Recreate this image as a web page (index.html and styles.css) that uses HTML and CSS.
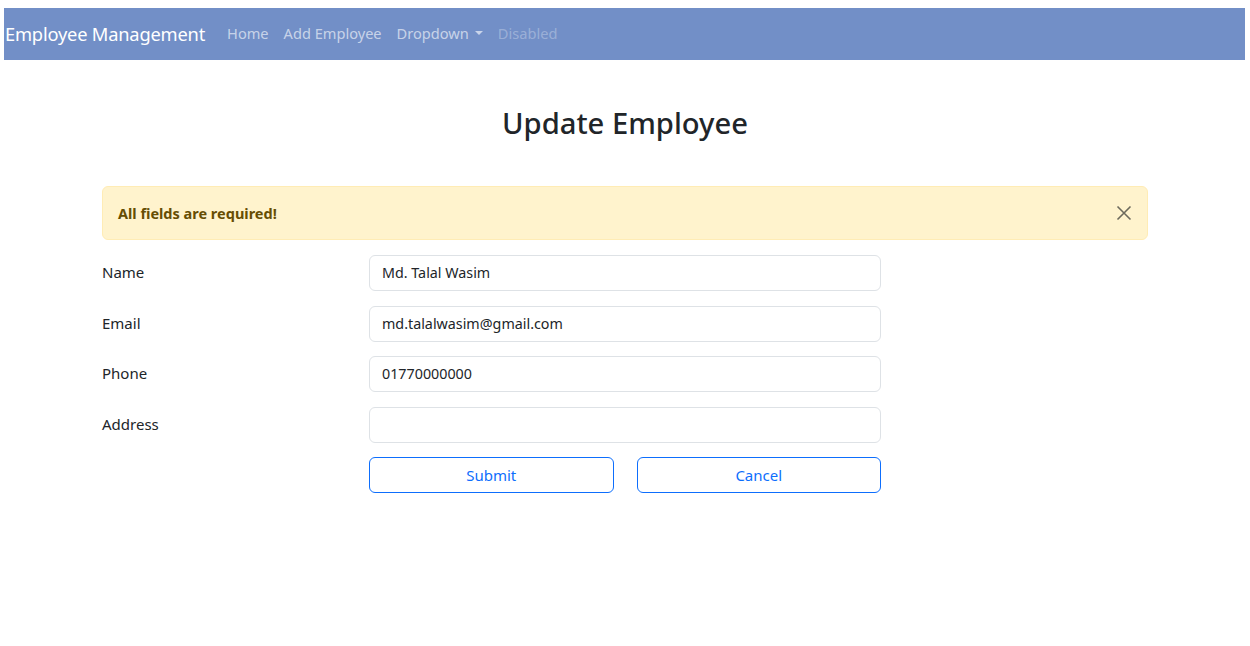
FILE: index.html
```html
<!DOCTYPE html>
<html>
<head>
<meta charset="utf-8">
<link rel="stylesheet" href="styles.css">
</head>
<body>
<nav class="navbar">
  <span class="brand">Employee Management</span>
  <ul class="nav">
    <li class="nav-link">Home</li>
    <li class="nav-link">Add Employee</li>
    <li class="nav-link">Dropdown <span class="caret"></span></li>
    <li class="nav-link disabled">Disabled</li>
  </ul>
</nav>
<main class="container">
  <h1 class="title">Update Employee</h1>
  <div class="alert">
    <strong>All fields are required!</strong>
    <button class="close" aria-label="Close">
      <svg width="16" height="16" viewBox="0 0 16 16"><path d="M1.5 1.5 L14.5 14.5 M14.5 1.5 L1.5 14.5" stroke="currentColor" stroke-width="1.6" fill="none"/></svg>
    </button>
  </div>
  <form class="form">
    <label class="label">Name</label>
    <input class="input" type="text" value="Md. Talal Wasim">
    <label class="label">Email</label>
    <input class="input" type="text" value="md.talalwasim@gmail.com">
    <label class="label">Phone</label>
    <input class="input" type="text" value="01770000000">
    <label class="label">Address</label>
    <input class="input" type="text" value="">
    <div class="buttons">
      <button type="button" class="btn">Submit</button>
      <button type="button" class="btn">Cancel</button>
    </div>
  </form>
</main>
</body>
</html>
```
FILE: styles.css
```css
* { box-sizing: border-box; }
html, body { margin: 0; padding: 0; background: #fff; }
body {
  font-family: "Noto Sans", "Open Sans", sans-serif;
  color: #212529;
  font-size: 15px;
}
.navbar {
  margin: 8px 5px 0 4px;
  height: 52px;
  background: #728fc7;
  display: flex;
  align-items: center;
  padding: 0 0 2px 1px;
}
.brand {
  color: #fff;
  font-size: 18.3px;
  margin-right: 22px;
  letter-spacing: -0.2px;
}
.nav {
  list-style: none;
  margin: 0;
  padding: 0;
  display: flex;
  gap: 15px;
}
.nav-link {
  color: rgba(255,255,255,0.62);
  font-size: 14.6px;
  display: flex;
  align-items: center;
}
.nav-link.disabled { color: rgba(255,255,255,0.3); }
.caret {
  display: inline-block;
  width: 0; height: 0;
  margin-left: 6px;
  border-top: 4px solid rgba(255,255,255,0.62);
  border-left: 4px solid transparent;
  border-right: 4px solid transparent;
}
.container {
  width: 1046px;
  margin: 0 auto 0 102px;
}
.title {
  text-align: center;
  font-size: 29.2px;
  font-weight: 500;
  margin: 44px 0 44px;
  line-height: 38px;
  color: #212529;
}
.alert {
  height: 54px;
  background: #fff3cd;
  border: 1px solid #ffecb5;
  border-radius: 6px;
  color: #664d03;
  padding: 0 15px 1px;
  display: flex;
  align-items: center;
  justify-content: space-between;
  margin-bottom: 15px;
  font-size: 14.5px;
}
.alert strong { font-weight: 700; }
.close {
  background: none;
  border: 0;
  padding: 0;
  margin-right: 0;
  color: #6d6a5c;
  display: flex;
}
.form {
  display: grid;
  grid-template-columns: 267px 512px;
  row-gap: 14.5px;
  align-items: center;
}
.label { font-size: 15px; color: #212529; padding-bottom: 2px; }
.input {
  height: 36px;
  border: 1px solid #dee2e6;
  border-radius: 6px;
  padding: 0 12px 1px;
  font-family: inherit;
  font-size: 14.3px;
  color: #212529;
  width: 100%;
}
.buttons {
  grid-column: 2;
  display: flex;
  gap: 23px;
}
.btn {
  flex: 1;
  height: 35.5px;
  background: #fff;
  border: 1px solid #0d6efd;
  border-radius: 6px;
  color: #0d6efd;
  font-family: inherit;
  font-size: 15px;
  padding-bottom: 1px;
}
```
